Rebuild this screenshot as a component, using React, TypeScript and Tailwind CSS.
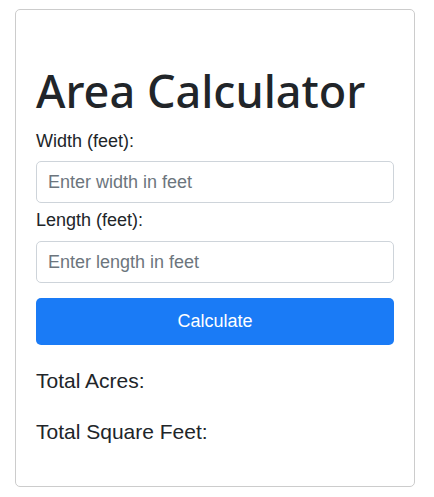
import React from "react";

export default function App() {
  const arial = { fontFamily: '"Liberation Sans", Arial, sans-serif' };
  return (
    <div className="w-[434px] h-[497px] bg-white" style={arial}>
      <div className="ml-[15px] mt-[9px] w-[400px] h-[478px] border border-[#cccccc] rounded-[5px] px-[20px] pt-[54px] flex flex-col text-[#212529]">
        <h1
          className="text-[45px] leading-[54px] font-medium text-[#212529] m-0 mb-[10px]"
          style={{ fontFamily: '"Noto Sans", "Open Sans", sans-serif' }}
        >
          Area Calculator
        </h1>
        <label className="text-[18px] leading-[27px] mb-[6px]">Width (feet):</label>
        <input
          type="number"
          placeholder="Enter width in feet"
          className="h-[42px] w-full border border-[#ced4da] rounded-[5px] px-[11px] text-[18px] text-[#212529] placeholder:text-[#6c757d] outline-none"
        />
        <label className="text-[18px] leading-[27px] mt-[4px] mb-[7px]">Length (feet):</label>
        <input
          type="number"
          placeholder="Enter length in feet"
          className="h-[42px] w-full border border-[#ced4da] rounded-[5px] px-[11px] text-[18px] text-[#212529] placeholder:text-[#6c757d] outline-none"
        />
        <button className="mt-[15px] h-[47px] w-full rounded-[5px] bg-[#1a7bf6] text-white text-[18px] flex items-center justify-center">
          Calculate
        </button>
        <p className="mt-[20px] text-[21px] leading-[31px]">Total Acres:</p>
        <p className="mt-[20px] text-[21px] leading-[31px]">Total Square Feet:</p>
      </div>
    </div>
  );
}
